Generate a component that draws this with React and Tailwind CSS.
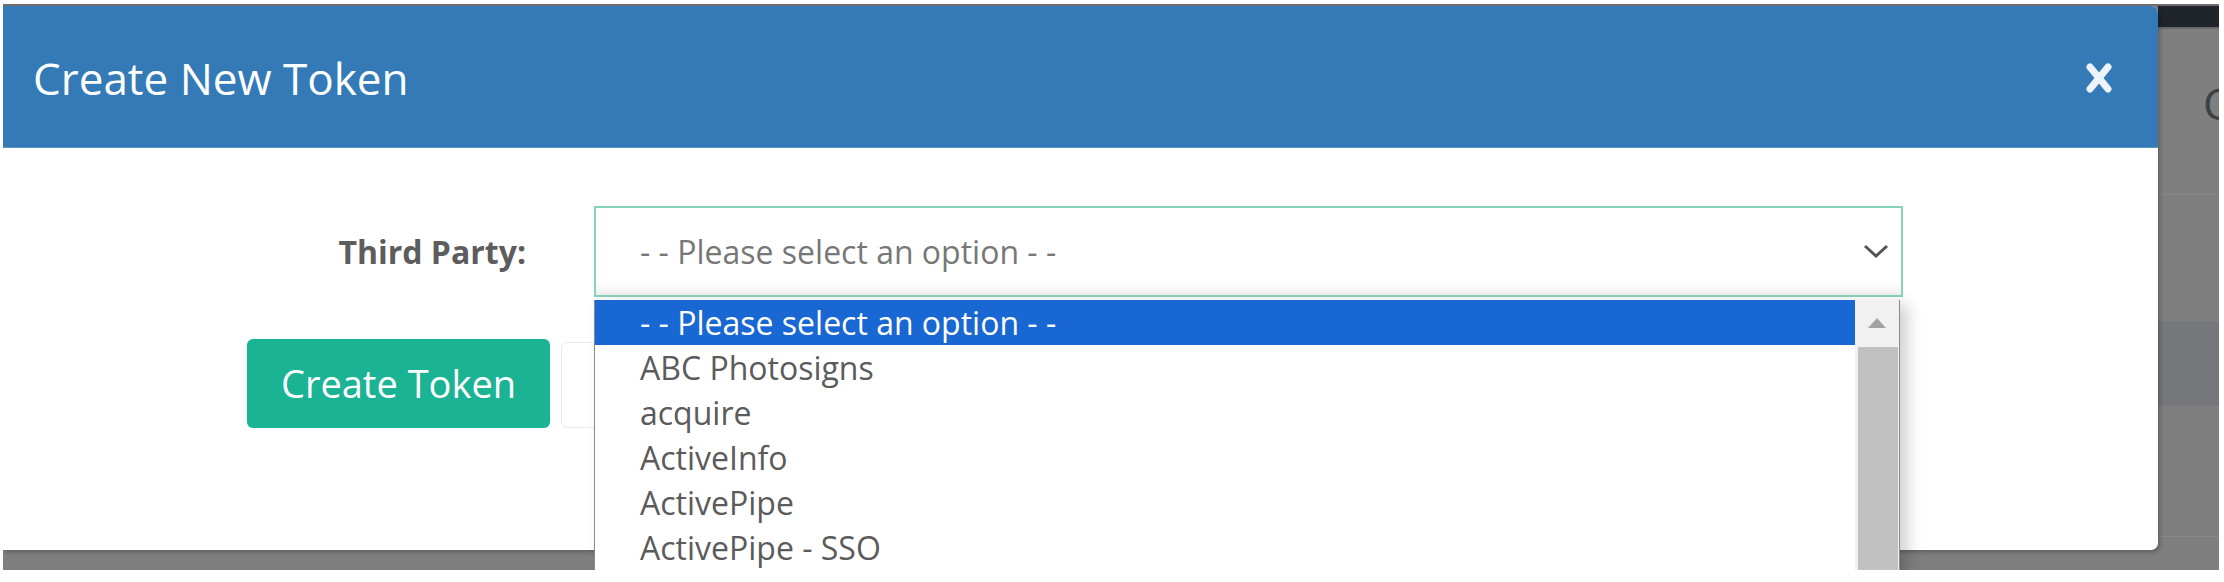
const OPTIONS = [
  '- - Please select an option - -',
  'ABC Photosigns',
  'acquire',
  'ActiveInfo',
  'ActivePipe',
  'ActivePipe - SSO',
]

// --- Native-looking dropdown list (open state) ---
const OptionList = () => (
  <div className="absolute left-[591px] top-[152px] z-10 flex h-[290px] w-[1306px] border-l border-r border-[#8a8a8a] bg-white shadow-[8px_4px_14px_rgba(0,0,0,0.18)]">
    <div className="flex-1">
      {OPTIONS.map((opt, i) => (
        <div
          key={opt}
          className={`h-[45px] pl-[45px] text-[32px] leading-[45px] ${
            i === 0 ? 'bg-[#1967d2] text-white' : 'text-[#5b5b5b]'
          }`}
        >
          {opt}
        </div>
      ))}
    </div>
    {/* Scrollbar */}
    <div className="flex w-[44px] flex-col bg-[#f1f1f1]">
      <div className="flex h-[45px] items-center justify-center">
        <svg width="18" height="10" viewBox="0 0 18 10">
          <polygon points="0,10 9,0 18,10" fill="#a3a3a3" />
        </svg>
      </div>
      <div className="ml-[3px] mr-[1px] mt-[2px] flex-1 bg-[#c1c1c1]" />
    </div>
  </div>
)

export default function App() {
  return (
    <div className="h-[582px] w-[2224px] bg-white font-['Open_Sans',sans-serif]">
      <div className="relative ml-[3px] mt-[4px] flex h-[566px] w-[2216px] overflow-hidden border-t-2 border-[#6e6e6e] bg-[#7f7f7f]">
        {/* Modal */}
        <div className="relative flex h-[544px] w-[2155px] shrink-0 flex-col rounded-br-[7px] rounded-tr-[7px] bg-white shadow-[2px_2px_4px_rgba(0,0,0,0.25)]">
          <div className="flex h-[142px] items-center justify-between rounded-tr-[7px] border-b border-[#5b93c4] bg-[#337ab7] pl-[30px] pr-[46px] pt-[2px]">
            <h4 className="text-[44px] font-normal text-white">Create New Token</h4>
            <svg width="26" height="30" viewBox="0 0 26 30">
              <g stroke="#eef3f9" strokeWidth="7" strokeLinecap="round">
                <line x1="4" y1="4" x2="22" y2="26" />
                <line x1="22" y1="4" x2="4" y2="26" />
              </g>
            </svg>
          </div>

          <div className="relative flex-1">
            {/* Form row */}
            <div className="mt-[58px] flex h-[91px] items-center">
              <label className="w-[523px] text-right text-[32px] font-bold text-[#5d5d5d]">
                Third Party:
              </label>
              <div className="ml-[68px] flex h-[91px] w-[1309px] items-center justify-between border-2 border-[#86d3bd] bg-white pl-[44px] pr-[12px] shadow-[inset_0_-14px_12px_-10px_rgba(0,0,0,0.09)]">
                <span className="text-[32px] text-[#777]">- - Please select an option - -</span>
                <svg width="26" height="15" viewBox="0 0 26 15">
                  <polyline points="2,2 13,12 24,2" fill="none" stroke="#555" strokeWidth="3" />
                </svg>
              </div>
            </div>

            {/* Buttons */}
            <div className="ml-[244px] mt-[42px] flex gap-[11px]">
              <button className="h-[89px] w-[303px] rounded-[6px] bg-[#1ab394] text-[38px] text-white">
                Create Token
              </button>
              <button className="mt-[3px] h-[86px] w-[220px] rounded-[6px] border border-[#e7eaec] bg-white" />
            </div>

            <OptionList />
          </div>
        </div>

        {/* Page behind backdrop */}
        <div className="flex min-w-0 flex-1 flex-col">
          <div className="h-[23px] border-b-2 border-[#6a6a6a] bg-[#20242b]" />
          <div className="h-[165px] overflow-hidden pl-[45px] pt-[52px] text-[44px] leading-none text-[#3e4046]">
            C
          </div>
          <div className="h-[127px] border-t border-[#878787]" />
          <div className="h-[84px] border-t border-[#7a7b7e] bg-[#76777a]" />
          <div className="h-[131px] border-t border-[#7a7b7e]" />
          <div className="flex-1 border-t border-[#888]" />
        </div>
      </div>
    </div>
  )
}
